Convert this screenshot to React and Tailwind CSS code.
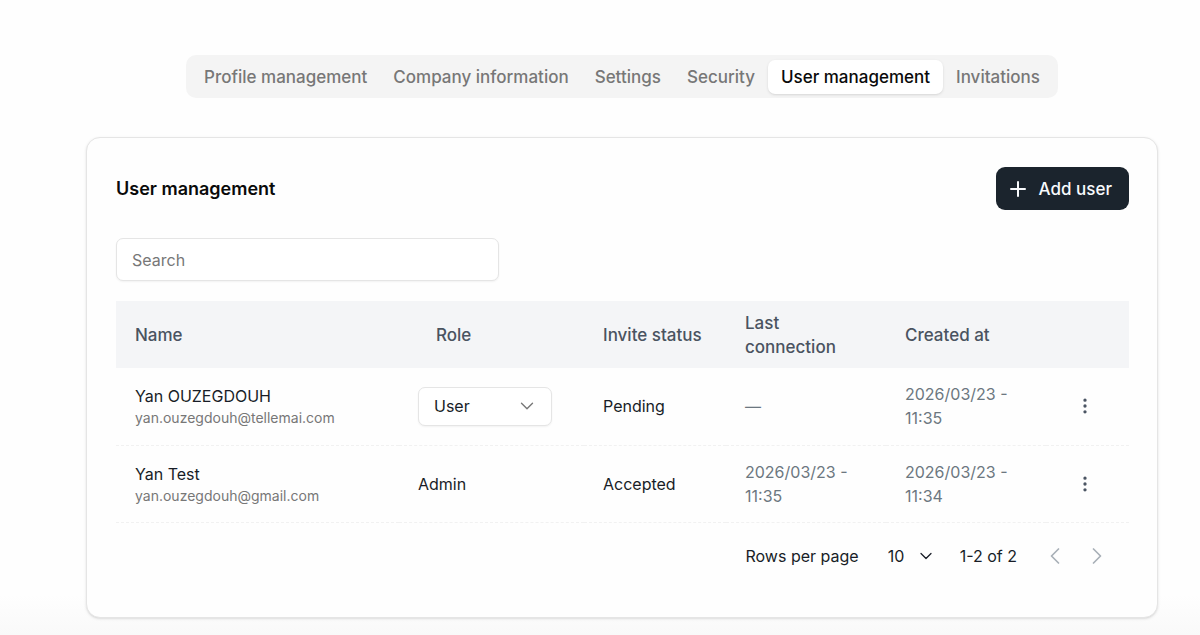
import React, { useState } from "react";
import { ChevronDown, ChevronLeft, ChevronRight, EllipsisVertical, Plus } from "lucide-react";

const tabs = [
  "Profile management",
  "Company information",
  "Settings",
  "Security",
  "User management",
  "Invitations",
];

const users = [
  {
    name: "Yan OUZEGDOUH",
    email: "yan.ouzegdouh@tellemai.com",
    role: "User",
    status: "Pending",
    lastConnection: null,
    createdAt: "2026/03/23 - 11:35",
  },
  {
    name: "Yan Test",
    email: "yan.ouzegdouh@gmail.com",
    role: "Admin",
    status: "Accepted",
    lastConnection: "2026/03/23 - 11:35",
    createdAt: "2026/03/23 - 11:34",
  },
];

function TabBar({ active, onChange }) {
  return (
    <div role="tablist" className="flex h-[43px] w-fit items-center rounded-[10px] bg-[#f4f4f4] px-[5px] text-[17px]">
      {tabs.map((tab) => (
        <button
          key={tab}
          type="button"
          role="tab"
          aria-selected={tab === active}
          onClick={() => onChange(tab)}
          className={
            tab === active
              ? "h-[34px] cursor-pointer whitespace-nowrap rounded-[7px] bg-white px-[13px] font-medium text-[#0a0a0a] shadow-sm"
              : "h-[34px] cursor-pointer whitespace-nowrap rounded-[7px] px-[13px] font-medium text-[#777777]"
          }
        >
          {tab}
        </button>
      ))}
    </div>
  );
}

function RoleSelect({ value, label }) {
  const [role, setRole] = useState(value);

  return (
    <div className="relative w-[134px]">
      <select
        aria-label={label}
        value={role}
        onChange={(e) => setRole(e.target.value)}
        className="block h-[39px] w-full appearance-none rounded-[7px] border border-[#e5e5e5] bg-white pl-[15px] pr-9 text-[#181d27] shadow-xs"
      >
        <option>User</option>
        <option>Admin</option>
      </select>
      <ChevronDown size={22} strokeWidth={1.5} className="pointer-events-none absolute right-[14px] top-2 text-[#777777]" />
    </div>
  );
}

function UserRow({ user }) {
  return (
    <tr className="h-[77px] border-b border-dashed border-[#f1f1f1]">
      <td className="px-[19px]">
        <div className="text-[#181d27]">{user.name}</div>
        <div className="text-sm leading-5 text-[#777777]">{user.email}</div>
      </td>
      <td className="px-[19px] text-[#181d27]">
        {user.role === "User" ? <RoleSelect value={user.role} label={"Role of " + user.name} /> : user.role}
      </td>
      <td className="px-[19px] text-[#181d27]">{user.status}</td>
      <td className="px-[19px] text-[#6c7780]">{user.lastConnection || "—"}</td>
      <td className="px-[19px] text-[#6c7780]">{user.createdAt}</td>
      <td>
        <button type="button" aria-label={"Actions for " + user.name} className="mx-auto flex cursor-pointer pr-[6px] text-[#4b5563]">
          <EllipsisVertical size={20} />
        </button>
      </td>
    </tr>
  );
}

export default function App() {
  const [active, setActive] = useState("User management");
  const [search, setSearch] = useState("");
  const [pageSize, setPageSize] = useState("10");

  // filter on name or email
  const rows = users.filter((u) =>
    (u.name + " " + u.email).toLowerCase().includes(search.toLowerCase())
  );

  return (
    <div className="min-h-screen bg-[linear-gradient(to_top,#f9f9f9,#fefefe_40px)] pb-4 pl-[86px] pr-[42px] pt-[55px] font-['Inter',sans-serif] text-base leading-6">
      <div className="flex justify-center">
        <TabBar active={active} onChange={setActive} />
      </div>

      <div className="mt-[39px] rounded-[14px] border border-[#e5e5e5] bg-[#fefefe] pb-[39px] pl-[29px] pr-7 pt-[29px] shadow-sm">
        <div className="flex items-center justify-between">
          <h1 className="text-lg font-semibold text-[#0a0a0a]">User management</h1>
          <button type="button" className="flex h-[43px] cursor-pointer items-center gap-[9px] rounded-[9px] bg-[#1b242d] pl-[10px] pr-[17px] text-[17px] font-medium text-[#f8fafc]">
            <Plus size={24} />
            Add user
          </button>
        </div>

        <input
          type="text"
          aria-label="Search"
          placeholder="Search"
          value={search}
          onChange={(e) => setSearch(e.target.value)}
          className="mt-7 block h-[43px] w-[383px] rounded-[7px] border border-[#e5e5e5] bg-white px-[15px] shadow-xs placeholder:text-[#777777]"
        />

        <table className="mt-5 w-full table-fixed border-collapse text-left">
          <colgroup>
            <col />
            <col className="w-[185px]" />
            <col className="w-[142px]" />
            <col className="w-[160px]" />
            <col className="w-[160px]" />
            <col className="w-[83px]" />
          </colgroup>
          <thead>
            <tr className="h-[67px] bg-[#f4f5f7] text-[17px] text-[#4a5360]">
              <th className="px-[19px] font-medium">Name</th>
              <th className="px-[37px] font-medium">Role</th>
              <th className="whitespace-nowrap px-[19px] font-medium">Invite status</th>
              <th className="px-[19px] font-medium">Last connection</th>
              <th className="px-[19px] font-medium">Created at</th>
              <th aria-label="Actions"></th>
            </tr>
          </thead>
          <tbody>
            {rows.map((user) => (
              <UserRow key={user.email} user={user} />
            ))}
          </tbody>
        </table>

        <div className="mt-3 flex h-[43px] items-center justify-end pr-[18px] text-[#181d27]">
          <label htmlFor="pageSize">Rows per page</label>
          <div className="relative ml-[29px]">
            <select
              id="pageSize"
              value={pageSize}
              onChange={(e) => setPageSize(e.target.value)}
              className="block w-12 appearance-none bg-transparent"
            >
              <option>10</option>
              <option>25</option>
              <option>50</option>
            </select>
            <ChevronDown size={20} strokeWidth={1.5} className="pointer-events-none absolute right-0 top-[2px]" />
          </div>
          <span className="ml-6">1-2 of 2</span>
          <button type="button" aria-label="Previous page" disabled className="ml-6 text-[#a9b0b8]">
            <ChevronLeft size={28} strokeWidth={1.5} />
          </button>
          <button type="button" aria-label="Next page" disabled className="ml-[14px] text-[#a9b0b8]">
            <ChevronRight size={28} strokeWidth={1.5} />
          </button>
        </div>
      </div>
    </div>
  );
}
